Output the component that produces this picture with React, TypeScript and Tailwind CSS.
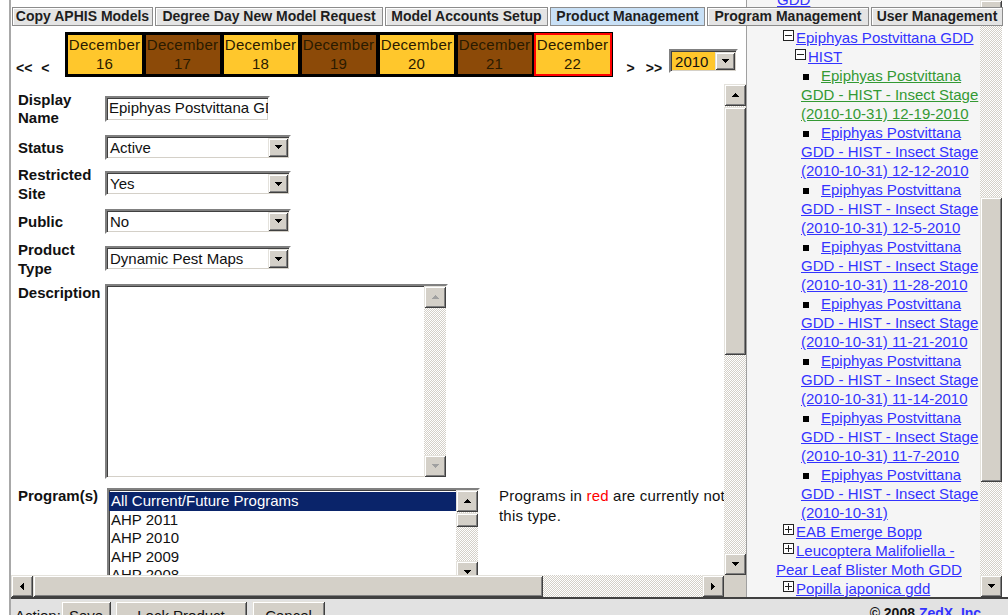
import type { ReactNode } from "react"

type Dir = "up" | "down" | "left" | "right"

const raised =
  "bg-[#d4d0c8] shadow-[inset_1px_1px_0_#e4e2dc,inset_-1px_-1px_0_#404040,inset_2px_2px_0_#ffffff,inset_-2px_-2px_0_#808080]"
const sunken =
  "border-2 border-t-[#808080] border-l-[#808080] border-b-[#ffffff] border-r-[#ffffff] shadow-[inset_1px_1px_0_#404040,inset_-1px_-1px_0_#d4d0c8]"
const dither =
  "bg-[image:repeating-conic-gradient(#d4d0c8_0%_25%,#ffffff_0%_50%)] bg-[length:2px_2px]"
const link = "underline text-[#3333ff]"

const arrows: Record<Dir, { w: number; h: number; d: string }> = {
  up: { w: 7, h: 4, d: "M3 0h1v1h1v1h1v1h1v1H0V3h1V2h1V1h1z" },
  down: { w: 7, h: 4, d: "M0 0h7v1H6v1H5v1H4v1H3V3H2V2H1V1H0z" },
  left: { w: 4, h: 7, d: "M3 0h1v7H3V6H2V5H1V4H0V3h1V2h1V1h1z" },
  right: { w: 4, h: 7, d: "M0 0h1v1h1v1h1v1h1v1H3v1H2v1H1v1H0z" },
}

function Arrow({ dir, muted = false }: { dir: Dir; muted?: boolean }) {
  const a = arrows[dir]
  return (
    <svg width={a.w} height={a.h} viewBox={`0 0 ${a.w} ${a.h}`} shapeRendering="crispEdges">
      <path d={a.d} fill={muted ? "#a0a0a0" : "#000000"} />
    </svg>
  )
}

function ScrollButton({ dir, muted }: { dir: Dir; muted?: boolean }) {
  return (
    <div className={`${raised} w-[22px] h-[22px] shrink-0 flex items-center justify-center`}>
      <Arrow dir={dir} muted={muted} />
    </div>
  )
}

function VScroll({ className, gap, thumb, muted }: { className: string; gap?: string; thumb?: string; muted?: boolean }) {
  return (
    <div className={`w-[22px] shrink-0 flex flex-col ${className}`}>
      <ScrollButton dir="up" muted={muted} />
      <div className={`flex-1 flex flex-col ${dither}`}>
        {thumb && (
          <>
            <div className={`shrink-0 ${gap}`} />
            <div className={`shrink-0 ${raised} ${thumb}`} />
          </>
        )}
      </div>
      <ScrollButton dir="down" muted={muted} />
    </div>
  )
}

function Select({ value, className }: { value: string; className: string }) {
  return (
    <div className={`${sunken} h-[25px] shrink-0 flex items-center bg-white ${className}`}>
      <span className="flex-1 pl-[3px] leading-[19px] whitespace-nowrap overflow-hidden">{value}</span>
      <div className={`${raised} w-[20px] h-[19px] mr-px flex items-center justify-center`}>
        <Arrow dir="down" />
      </div>
    </div>
  )
}

const yellow = "bg-[#ffc72c] border-black"
const brown = "bg-[#8c4a08] border-black"

const days = [
  { day: 16, tone: yellow },
  { day: 17, tone: brown },
  { day: 18, tone: yellow },
  { day: 19, tone: brown },
  { day: 20, tone: yellow },
  { day: 21, tone: brown },
  { day: 22, tone: "bg-[#ffc72c] border-[#ff0000]" },
]

function DateStrip() {
  return (
    <div className="h-[58px] shrink-0 flex items-start pt-[6px] pl-[5px]">
      <span className="mt-[27px] font-bold text-[14px] leading-[19px]">&lt;&lt;</span>
      <span className="mt-[27px] ml-[9px] font-bold text-[14px] leading-[19px]">&lt;</span>
      <div className="ml-[15px] flex bg-black p-px">
        {days.map((d) => (
          <div
            key={d.day}
            className={`w-[78px] h-[43px] border-2 ${d.tone} flex flex-col items-center overflow-hidden whitespace-nowrap text-[15px] tracking-[0.3px] leading-[19px] text-[#2a1a00]`}
          >
            <span>December</span>
            <span>{d.day}</span>
          </div>
        ))}
      </div>
      <span className="mt-[27px] ml-[14px] font-bold text-[14px] leading-[19px]">&gt;</span>
      <span className="mt-[27px] ml-[11px] font-bold text-[14px] leading-[19px]">&gt;&gt;</span>
      <div className={`${sunken} ml-[7px] mt-[17px] w-[69px] h-[24px] bg-[#ffc72c] flex items-center`}>
        <span className="flex-1 pl-[4px] leading-[19px]">2010</span>
        <div className={`${raised} w-[20px] h-[18px] mr-px flex items-center justify-center`}>
          <Arrow dir="down" />
        </div>
      </div>
    </div>
  )
}

function Label({ children, className = "" }: { children: ReactNode; className?: string }) {
  return <div className={`w-[94px] shrink-0 pl-[7px] font-bold ${className}`}>{children}</div>
}

const programs = ["AHP 2011", "AHP 2010", "AHP 2009", "AHP 2008"]

function ProductForm() {
  return (
    <div className="pt-[5px]">
      <div className="flex items-center h-[39px]">
        <Label className="leading-[18px]">Display<br />Name</Label>
        <div className={`${sunken} w-[165px] h-[26px] shrink-0 flex items-center pl-[2px] overflow-hidden whitespace-nowrap`}>
          Epiphyas Postvittana GDD
        </div>
      </div>
      <div className="flex items-center h-[38px]">
        <Label className="leading-[19px]">Status</Label>
        <Select value="Active" className="w-[186px]" />
      </div>
      <div className="flex items-center h-[35px]">
        <Label className="leading-[19px]">Restricted<br />Site</Label>
        <Select value="Yes" className="w-[186px]" />
      </div>
      <div className="flex items-center h-[40px]">
        <Label className="leading-[19px]">Public</Label>
        <Select value="No" className="w-[186px]" />
      </div>
      <div className="flex items-center h-[35px]">
        <Label className="leading-[19px]">Product<br />Type</Label>
        <Select value="Dynamic Pest Maps" className="w-[186px]" />
      </div>
      <div className="flex items-start pt-[8px]">
        <Label className="leading-[18px]">Description</Label>
        <div className={`${sunken} w-[343px] h-[195px] shrink-0 flex justify-end bg-white`}>
          <VScroll className="h-[191px]" muted />
        </div>
      </div>
      <div className="flex items-start mt-[8px]">
        <Label className="leading-[18px]">Program(s)</Label>
        <div className={`${sunken} ml-[2px] mt-px w-[373px] h-[97px] shrink-0 flex bg-white`}>
          <div className="flex-1 pt-[2px] leading-[18.5px] whitespace-nowrap overflow-hidden">
            <div className="bg-[#0a246a] text-white pl-[2px]">All Current/Future Programs</div>
            {programs.map((p) => (
              <div key={p} className="pl-[2px]">{p}</div>
            ))}
          </div>
          <VScroll className="h-[93px]" gap="h-px" thumb="h-[14px]" />
        </div>
        <div className="ml-[19px] -mt-px shrink-0 leading-[20px] tracking-[0.2px] whitespace-nowrap">
          Programs in <span className="text-[#ff0000]">red</span> are currently not associated with
          <br />
          this type.
        </div>
      </div>
    </div>
  )
}

function TreeBox({ open = false }: { open?: boolean }) {
  return (
    <svg width="11" height="11" viewBox="0 0 11 11" className="inline-block align-[2px] mr-[2px]" shapeRendering="crispEdges">
      <rect x="0.5" y="0.5" width="10" height="10" fill="#ffffff" stroke="#222222" />
      <rect x="2" y="5" width="7" height="1" fill="#222222" />
      {!open && <rect x="5" y="2" width="1" height="7" fill="#222222" />}
    </svg>
  )
}

const runs = ["12-19-2010", "12-12-2010", "12-5-2010", "11-28-2010", "11-21-2010", "11-14-2010", "11-7-2010", ""]

function ModelTree() {
  return (
    <div className="w-[233px] h-[597px] shrink-0 overflow-hidden bg-[#f5f5f5] leading-[19px] whitespace-nowrap">
      <div className="-mt-[10px]">
        <div className="pl-[30px]"><a className={link}>GDD</a></div>
        <div className="pl-[48px]"><TreeBox open /><a className={link}>HIST</a></div>
        <div className="pl-[36px]"><TreeBox open /><a className={link}>Epiphyas Postvittana GDD</a></div>
        <div className="pl-[48px]"><TreeBox open /><a className={link}>HIST</a></div>
        {runs.map((r, i) => (
          <div key={i} className="pl-[54px]">
            <span className="inline-block w-[6px] h-[6px] bg-black ml-[2px] mr-[12px] align-[1px]" />
            <a className={i === 0 ? "underline text-[#339933]" : link}>
              Epiphyas Postvittana
              <br />
              GDD - HIST - Insect Stage
              <br />
              (2010-10-31){r ? ` ${r}` : ""}
            </a>
          </div>
        ))}
        <div className="pl-[36px]"><TreeBox /><a className={link}>EAB Emerge Bopp</a></div>
        <div className="pl-[36px]"><TreeBox /><a className={link}>Leucoptera Malifoliella -</a></div>
        <div className="pl-[29px]"><a className={link}>Pear Leaf Blister Moth GDD</a></div>
        <div className="pl-[36px]"><TreeBox /><a className={link}>Popilla japonica gdd</a></div>
        <div className="pl-[36px] h-[19px]"><TreeBox /></div>
      </div>
    </div>
  )
}

const tabs = [
  { name: "Copy APHIS Models", w: "w-[141px]" },
  { name: "Degree Day New Model Request", w: "w-[228px]" },
  { name: "Model Accounts Setup", w: "w-[163px]" },
  { name: "Product Management", w: "w-[155px]", active: true },
  { name: "Program Management", w: "w-[162px]" },
  { name: "User Management", w: "w-[132px]" },
]

export default function App() {
  return (
    <div className="relative w-[1008px] h-[615px] overflow-hidden bg-white text-[#111111] text-[15px] font-['Liberation_Sans',Arial,sans-serif]">
      <div className="flex h-[597px]">
        <div className="w-[9px] shrink-0" />
        <div className="w-[738px] shrink-0 flex flex-col border-l-2 border-l-[#a8a8a8] border-r border-r-[#a0a0a0]">
          <div className="h-[26px] shrink-0" />
          <DateStrip />
          <div className="flex">
            <div className="w-[713px] h-[491px] overflow-hidden">
              <ProductForm />
            </div>
            <VScroll className="h-[491px]" gap="h-px" thumb="h-[248px]" />
          </div>
          <div className="flex h-[22px]">
            <div className="w-[713px] flex">
              <ScrollButton dir="left" />
              <div className={`flex-1 flex ${dither}`}>
                <div className={`${raised} w-[510px]`} />
              </div>
              <ScrollButton dir="right" />
            </div>
            <div className="w-[22px] bg-[#d4d0c8]" />
          </div>
        </div>
        <div className="flex-1 flex">
          <ModelTree />
          <VScroll className="h-[597px]" gap="h-[175px]" thumb="h-[285px]" />
        </div>
      </div>

      {/* action bar */}
      <div className="flex h-[18px]">
        <div className="w-[9px] shrink-0" />
        <div className="w-[2px] shrink-0 bg-[#a8a8a8]" />
        <div className="flex-1 flex items-start bg-[#e2e2e2] border-t-2 border-t-[#404040]">
          <span className="w-[50px] shrink-0 pl-[4px] mt-[7px] leading-[19px]">Action:</span>
          <button className={`${raised} mt-[2px] w-[50px] h-[26px] pt-[3px] leading-[19px] text-center`}>Save</button>
          <button className={`${raised} mt-[2px] ml-[4px] w-[132px] h-[26px] pt-[3px] leading-[19px] text-center`}>Lock Product</button>
          <button className={`${raised} mt-[2px] ml-[5px] w-[73px] h-[26px] pt-[3px] leading-[19px] text-center`}>Cancel</button>
          <span className="ml-auto mr-[23px] mt-[5px] font-bold text-[14px] leading-[19px]">
            © 2008 <a className={link}>ZedX, Inc.</a>
          </span>
        </div>
      </div>

      {/* tab strip sits over the tree frame */}
      <div className="absolute top-[7px] left-[12px] flex gap-[2px]">
        {tabs.map((t) => (
          <div
            key={t.name}
            className={`${t.w} h-[19px] border border-[#8c8c8c] text-center font-bold text-[14px] leading-[17px] text-[#1e1e1e] whitespace-nowrap overflow-hidden ${
              t.active ? "bg-[#c8e0f6]" : "bg-[#e4e4e4] shadow-[inset_1px_1px_0_#ffffff]"
            }`}
          >
            {t.name}
          </div>
        ))}
      </div>
    </div>
  )
}
